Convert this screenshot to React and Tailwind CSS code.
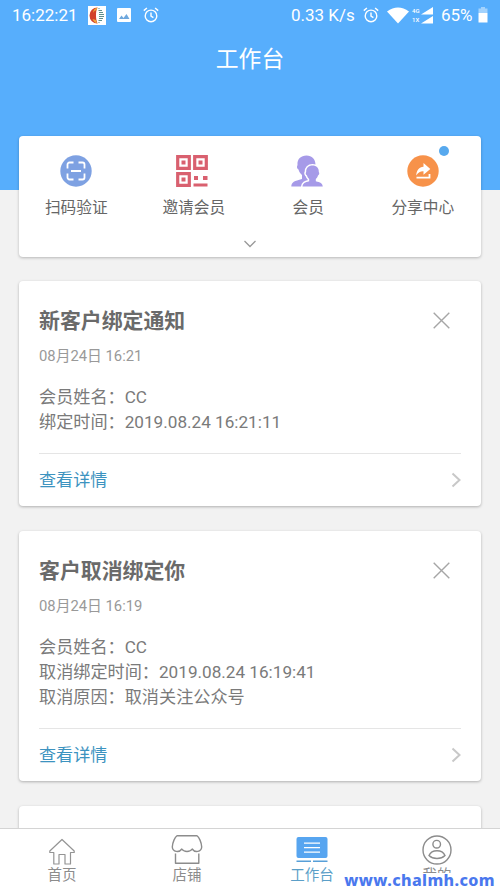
import { useState } from 'react';

const initialNotices = [
  {
    id: 1,
    title: '新客户绑定通知',
    date: '08月24日 16:21',
    lines: ['会员姓名：CC', '绑定时间：2019.08.24 16:21:11'],
  },
  {
    id: 2,
    title: '客户取消绑定你',
    date: '08月24日 16:19',
    lines: ['会员姓名：CC', '取消绑定时间：2019.08.24 16:19:41', '取消原因：取消关注公众号'],
  },
];

function AlarmIcon({ className }) {
  return (
    <svg viewBox="0 0 16 16" className={className} fill="none" stroke="currentColor" strokeWidth="1.4">
      <circle cx="8" cy="8.9" r="5.8" />
      <path d="M8 5.4v3.8l2.4 1.5M.8 3.6 3.9 1M15.2 3.6 12.1 1" />
    </svg>
  );
}

function StatusBar() {
  return (
    <div className="flex h-[30px] items-center text-[17px] leading-none">
      <span className="ml-3 w-[66px] whitespace-nowrap">16:22:21</span>
      <svg viewBox="0 0 18 19" className="ml-[10px] h-[19px] w-[18px]">
        <path fill="#fff" d="M0 0h18v19H0z" />
        <path fill="#d2402c" d="M9.500 1.500a8 8 0 0 0 0 16C8.500 15 8 12.500 8 9.500s.3-5.500 1.500-8z" />
        <path fill="#eda63a" d="M9.500 1.500C7 2 5 4 5 7c1-2 2-2.500 3.500-3zM4.500 13c1 2.500 2.800 4 5 4.500-.8-1-1.300-2-1.500-3.500z" />
        <path fill="none" stroke="#5d8f8c" d="M10.500 2.500h1M10.500 4.500h3.500M11 6.500h4M11 8.500h5M11 10.500h5M11 12.500h4M10.500 14.500h3.500M10.500 16.500h1" />
      </svg>
      <svg viewBox="0 0 14 14" className="ml-[11px] h-[14px] w-[14px]">
        <rect width="14" height="14" rx="1" fill="#fff" />
        <path fill="#6fa8dd" d="m2 11 2.500-3.500L6.500 10l3-4 3 5z" />
      </svg>
      <AlarmIcon className="ml-3 h-4 w-4" />
      <span className="ml-[132px] w-[65px] whitespace-nowrap">0.33 K/s</span>
      <AlarmIcon className="ml-[7px] h-4 w-4" />
      <svg viewBox="0 0 22 17" className="ml-2 h-[17px] w-[22px]">
        <path fill="#fff" d="M0 4.500Q11-3.500 22 4.500L11 16.500z" />
      </svg>
      <span className="ml-[3px] flex w-[9px] flex-col text-[6px] font-medium leading-[9px]">
        <span>4G</span>
        <span>1X</span>
      </span>
      <svg viewBox="0 0 12 17" className="h-[17px] w-[12px]">
        <path fill="#fff" d="M12 0v7.500H0zM12 9v7.500H0z" />
      </svg>
      <span className="ml-2 w-[32px] whitespace-nowrap">65%</span>
      <svg viewBox="0 0 10 16" className="ml-[5px] h-4 w-[10px]">
        <path fill="#fff" opacity=".45" d="M3 0h4v1.500h2.500V6H.5V1.500H3z" />
        <path fill="#fff" d="M.5 6h9v9.500H.5z" />
      </svg>
    </div>
  );
}

function ScanIcon() {
  return (
    <svg viewBox="0 0 32 32" className="h-8 w-8">
      <circle cx="16" cy="16" r="15.700" fill="#7ea1e2" />
      <path
        fill="none"
        stroke="#fff"
        strokeWidth="1.800"
        d="M13.500 7.500H9.500a2 2 0 0 0-2 2v4M18.500 7.500h4a2 2 0 0 1 2 2v4M24.500 18.500v4a2 2 0 0 1-2 2h-4M13.500 24.500h-4a2 2 0 0 1-2-2v-4M11 16h10"
      />
    </svg>
  );
}

function QrIcon() {
  return (
    <svg viewBox="0 0 32 32" className="h-8 w-8">
      <g fill="none" stroke="#d9606f" strokeWidth="3.200">
        <path d="M1.700 1.700h11.600v11.600H1.700zM18.700 1.700h11.600v11.600H18.700zM1.700 18.700h11.600v11.600H1.700z" />
      </g>
      <path
        fill="#d9606f"
        d="M5.500 5.500h4v4h-4zM22.500 5.500h4v4h-4zM5.500 22.500h4v4h-4zM18 21h4v4h-4zM27 21h4.500v4H27zM17.500 28.500h14v3h-14z"
      />
    </svg>
  );
}

// The front figure gets a white outline that cuts it out of the one behind
function MembersIcon() {
  return (
    <svg viewBox="0 0 32 32" className="h-8 w-8">
      <path
        fill="#a69ae8"
        d="M15.500.5c5.500 0 8.800 3.500 9 9l-1 6-6 9-2.500 7H.3c.2-4.500 3-5.500 10.700-7.500v-4c-1.800-1.500-3-3.500-3.500-5.500-1.500-.8-2-2.500-1-4.500C6 4 10 .5 15.500.5z"
      />
      <path
        fill="#a69ae8"
        stroke="#fff"
        strokeWidth="3"
        paintOrder="stroke"
        d="M21.500 10.500c4 0 6.500 2.500 6.300 6.500.9 1.200.4 2.900-.8 3.500-.4 1.500-1.200 2.700-2.200 3.500v2.200c4.500 1.200 6.700 2 7 5.300H11.500c.3-3.300 2.500-4.100 6.700-5.300V24c-1-.8-1.800-2-2.200-3.500-1.200-.6-1.700-2.300-.8-3.500-.2-4 2.300-6.500 6.300-6.500z"
      />
    </svg>
  );
}

function ShareIcon() {
  return (
    <svg viewBox="0 0 32 32" className="h-8 w-8">
      <circle cx="16" cy="16" r="15.700" fill="#f7924a" />
      <path fill="#fff" d="M16.500 8l6.800 6-6.800 5.800v-3.500c-3-.2-5 1-7.300 4.200.3-5.200 3-8.500 7.300-8.800z" />
      <path fill="none" stroke="#fff" strokeWidth="1.800" d="M9.500 22.700h13V19" />
    </svg>
  );
}

const shortcuts = [
  { label: '扫码验证', icon: ScanIcon },
  { label: '邀请会员', icon: QrIcon, labelClass: 'ml-1' },
  { label: '会员', icon: MembersIcon, labelClass: 'ml-0.5' },
  { label: '分享中心', icon: ShareIcon, dot: true },
];

function Shortcuts() {
  return (
    <section className="mx-[19px] -mt-[54px] flex h-[121px] flex-col rounded bg-white shadow-[0_1px_3px_rgba(0,0,0,0.25)]">
      <div className="grid grid-cols-4 pt-[19px]">
        {shortcuts.map(({ label, icon: Icon, labelClass, dot }) => (
          <button key={label} className="flex flex-col items-center pr-px">
            <span className="relative">
              <Icon />
              {dot && <span className="absolute -top-[9px] left-[32px] h-[10px] w-[10px] rounded-full bg-[#57a9ee]" />}
            </span>
            <span className={`mt-[9px] text-[15.7px] leading-6 text-[#666] ${labelClass || ''}`}>{label}</span>
          </button>
        ))}
      </div>
      <svg viewBox="0 0 14 8" className="mx-auto mt-[20px] h-2 w-[14px]" fill="none" stroke="#999" strokeWidth="1.300">
        <path d="m1.500 1 5.500 5.500L12.500 1" />
      </svg>
    </section>
  );
}

function NoticeCard({ notice, onClose }) {
  return (
    <article className="rounded bg-white px-5 pt-6 shadow-[0_1px_3px_rgba(0,0,0,0.28)]">
      <div className="flex h-[30px] items-center justify-between">
        <h2 className="pt-[2px] text-[20.9px] font-bold leading-[30px] text-[#6a6a6a]">{notice.title}</h2>
        <button onClick={onClose} className="mr-[11px]" aria-label="关闭">
          <svg viewBox="0 0 17 17" className="h-[17px] w-[17px]" fill="none" stroke="#a6a6a6" strokeWidth="1.400">
            <path d="m.7.7 15.600 15.600M16.300.7.7 16.300" />
          </svg>
        </button>
      </div>
      <p className="mt-[11px] text-[14.8px] leading-5 text-[#999]">{notice.date}</p>
      <div className="mt-[19px] text-[17.150px] leading-[25px] text-[#7a7a7a]">
        {notice.lines.map(line => (
          <p key={line}>{line}</p>
        ))}
      </div>
      <div className="mt-[18px] flex h-[53px] items-center justify-between border-t border-[#e5e5e5]">
        <a className="pt-[2px] text-[17.1px] text-[#3c93c0]">查看详情</a>
        <svg viewBox="0 0 10 16" className="h-4 w-[10px]" fill="none" stroke="#c8c8c8" strokeWidth="2">
          <path d="m1.500 1.500 7 6.500-7 6.500" />
        </svg>
      </div>
    </article>
  );
}

function HomeIcon() {
  return (
    <svg viewBox="0 0 32 32" className="h-8 w-8" fill="none" stroke="#949494" strokeWidth="1.200" strokeLinejoin="round">
      <path d="M16 5.500 3.800 17v1.500h4V30H13V20.500h6V30h5.500V18.500h3.700V17z" />
    </svg>
  );
}

function ShopIcon() {
  return (
    <svg viewBox="0 0 32 32" className="h-8 w-8" fill="none" stroke="#8c8c8c" strokeWidth="1.400" strokeLinejoin="round">
      <path d="M6 1.700h20c2 1.500 4.500 6.500 4.700 11.300-.4 5-6.700 6-9.500 2-2 3.300-8.400 3.300-10.400 0-2.800 4-9.100 3-9.500-2C1.500 8.200 4 3.200 6 1.700z" />
      <path d="M4.500 19.500v9.700h23.300v-9.700" />
    </svg>
  );
}

function DeskIcon() {
  return (
    <svg viewBox="0 0 32 32" className="h-8 w-8">
      <rect x=".5" y="3" width="31" height="21" rx="2" fill="#57a5f0" />
      <path stroke="#fff" strokeWidth="1.300" d="M8 9.200h16M8 13.700h16M8 18.200h16" />
      <path stroke="#579fd8" strokeWidth="1.400" d="M.5 27.200h14.500M17 27.200h14.500" />
    </svg>
  );
}

function MeIcon() {
  return (
    <svg viewBox="0 0 32 32" className="h-8 w-8" fill="none" stroke="#8c8c8c" strokeWidth="1.400">
      <circle cx="16" cy="16" r="14" />
      <circle cx="15.700" cy="10.200" r="3.800" />
      <path d="M8 21.500c1.500-3.500 4.500-4.700 8-4.700s6.500 1.200 8 4.700c-4 4-12 4-16 0z" />
    </svg>
  );
}

const tabs = [
  { label: '首页', icon: HomeIcon },
  { label: '店铺', icon: ShopIcon },
  { label: '工作台', icon: DeskIcon },
  { label: '我的', icon: MeIcon },
];

export default function App() {
  const [notices, setNotices] = useState(initialNotices);
  const [activeTab, setActiveTab] = useState('工作台');

  return (
    <div className="relative flex h-[889px] w-[500px] flex-col overflow-hidden bg-[#f2f2f2] font-['Roboto','Noto_Sans_CJK_SC',sans-serif]">
      <header className="h-[190px] shrink-0 bg-[#57aefc] text-white">
        <StatusBar />
        <h1 className="mt-[13px] text-center text-[22.8px] leading-[34px]">工作台</h1>
      </header>

      <main className="min-h-0 flex-1">
        <Shortcuts />
        <div className="mx-[19px] mt-6 flex flex-col gap-[25px]">
          {notices.map(notice => (
            <NoticeCard
              key={notice.id}
              notice={notice}
              onClose={() => setNotices(notices.filter(n => n.id !== notice.id))}
            />
          ))}
          <div className="h-[60px] rounded bg-white shadow-[0_1px_3px_rgba(0,0,0,0.28)]" />
        </div>
      </main>

      <nav className="relative z-10 grid h-[61px] shrink-0 grid-cols-4 border-t border-[#d4d4d4] bg-white">
        {tabs.map(({ label, icon: Icon }) => (
          <button key={label} onClick={() => setActiveTab(label)} className="flex flex-col items-center pt-[5px] pr-px">
            <Icon />
            <span className={`text-[14.500px] leading-[19px] ${activeTab === label ? 'text-[#5b9fc8]' : 'text-[#8c8c8c]'}`}>
              {label}
            </span>
          </button>
        ))}
      </nav>

      <div className="absolute bottom-0 right-[5px] z-20 bg-white pb-px font-['Noto_Sans','Open_Sans',sans-serif] text-[16px] font-extrabold leading-[15px] tracking-[0.4px] text-[#4a78ee]">
        www.chalmh.com
      </div>
    </div>
  );
}
